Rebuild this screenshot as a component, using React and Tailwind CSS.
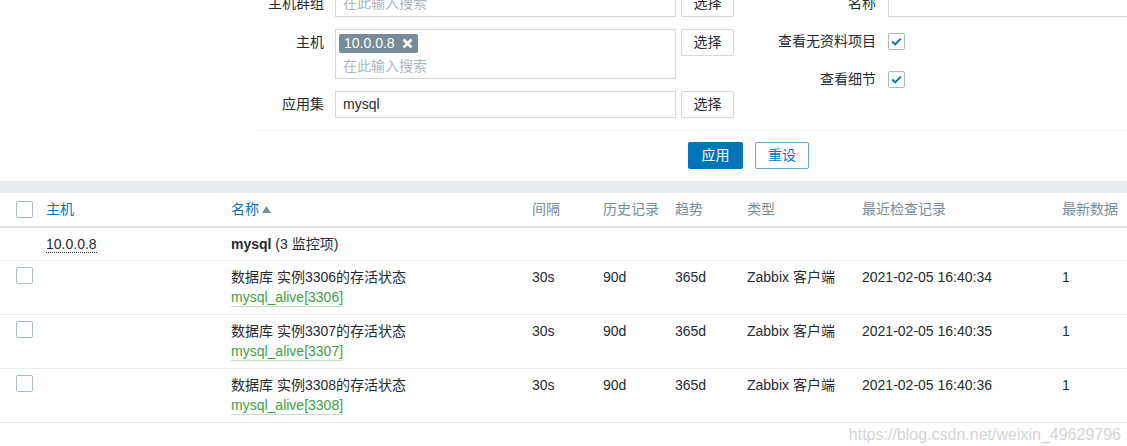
import React from 'react';

const font = { fontFamily: '"Liberation Sans", Arial, "Noto Sans CJK SC", sans-serif' };

const cols = 'grid grid-cols-[46px_185px_301px_71px_72px_72px_115px_200px_1fr]';

const Box = ({ checked }) => (
  <span className="inline-flex items-center justify-center w-[17px] h-[17px] border border-[#acbbc2] rounded-[2px] bg-white">
    {checked && (
      <svg width="11" height="9" viewBox="0 0 11 9">
        <path d="M1.2 4.6 L4.2 7.4 L9.8 1.6" fill="none" stroke="#0275b8" strokeWidth="2" />
      </svg>
    )}
  </span>
);

const SelectBtn = () => (
  <button className="ml-[5px] w-[53px] h-[27px] border border-[#cfd8dc] rounded-[2px] bg-white text-[#1f2c33] shrink-0">
    选择
  </button>
);

const items = [
  { n: '3306', t: '16:40:34' },
  { n: '3307', t: '16:40:35' },
  { n: '3308', t: '16:40:36' },
];

export default function App() {
  return (
    <div className="relative w-[1127px] h-[446px] overflow-hidden bg-[#ebeef0] text-[14px] text-[#1f2c33]" style={font}>
      <div className="bg-white h-[181px] overflow-hidden">
        <div className="ml-[258px] -mt-[10px] h-[141px] flex border-b border-[#f0f2f3]">
          <div className="flex flex-col gap-[12px]">
            <div className="flex items-center">
              <span className="w-[66px] text-right">主机群组</span>
              <div className="ml-[11px] w-[341px] h-[27px] border border-[#cfd8dc] px-[7px] leading-[25px] text-[#acb6bb]">在此输入搜索</div>
              <SelectBtn />
            </div>
            <div className="flex items-start">
              <span className="w-[66px] text-right leading-[27px]">主机</span>
              <div className="ml-[11px] w-[341px] h-[50px] border border-[#cfd8dc] px-[3px] pt-[3px]">
                <span className="inline-flex items-center h-[19px] px-[5px] rounded-[2px] bg-[#768d99] text-white leading-[19px]">
                  10.0.0.8
                  <svg className="ml-[7px]" width="11" height="11" viewBox="0 0 11 11">
                    <path d="M1.5 1.5 L9.5 9.5 M9.5 1.5 L1.5 9.5" stroke="#fff" strokeWidth="2.6" />
                  </svg>
                </span>
                <div className="px-[4px] mt-[2px] leading-[20px] text-[#acb6bb]">在此输入搜索</div>
              </div>
              <SelectBtn />
            </div>
            <div className="flex items-center">
              <span className="w-[66px] text-right">应用集</span>
              <div className="ml-[11px] w-[341px] h-[27px] border border-[#cfd8dc] px-[7px] leading-[25px]">mysql</div>
              <SelectBtn />
            </div>
          </div>
          <div className="ml-[12px] flex flex-col">
            <div className="flex items-center h-[27px]">
              <span className="w-[130px] text-right">名称</span>
              <div className="ml-[12px] w-[250px] h-[27px] border border-[#cfd8dc]"></div>
            </div>
            <div className="flex items-center h-[25px] mt-[12px]">
              <span className="w-[130px] text-right">查看无资料项目</span>
              <span className="ml-[12px] flex"><Box checked /></span>
            </div>
            <div className="flex items-center h-[25px] mt-[13px]">
              <span className="w-[130px] text-right">查看细节</span>
              <span className="ml-[12px] flex"><Box checked /></span>
            </div>
          </div>
        </div>
        <div className="flex ml-[688px] mt-[11px] gap-[12px]">
          <button className="w-[55px] h-[27px] rounded-[2px] bg-[#0275b8] text-white">应用</button>
          <button className="w-[54px] h-[27px] rounded-[2px] border border-[#5fa8d6] bg-white text-[#0275b8]">重设</button>
        </div>
      </div>

      <div className="mt-[12px] bg-white h-[253px]">
        <div className={`${cols} h-[35px] items-center border-b-2 border-[#dfe4e7] text-[#768d99]`}>
          <span className="pl-[16px] flex"><Box /></span>
          <span className="text-[#0275b8]">主机</span>
          <span className="text-[#0275b8] flex items-center">
            名称
            <svg className="ml-[3px]" width="9" height="7" viewBox="0 0 9 7"><path d="M0 7 L4.5 0 L9 7 Z" fill="#768d99" /></svg>
          </span>
          <span>间隔</span>
          <span>历史记录</span>
          <span>趋势</span>
          <span>类型</span>
          <span>最近检查记录</span>
          <span>最新数据</span>
        </div>
        <div className={`${cols} h-[33px] items-center border-b border-[#ebeef0]`}>
          <span></span>
          <span><span className="border-b border-dotted border-[#1f2c33] leading-[16px] inline-block">10.0.0.8</span></span>
          <span className="col-span-7"><b>mysql</b> (3 监控项)</span>
        </div>
        {items.map((it) => (
          <div key={it.n} className={`${cols} h-[54px] pt-[6px] border-b border-[#ebeef0] leading-[20px]`}>
            <span className="pl-[16px] flex"><Box /></span>
            <span></span>
            <span>
              <div>数据库 实例{it.n}的存活状态</div>
              <div><span className="text-[#429e47] border-b border-[#c5dfc6] leading-[18px] inline-block">mysql_alive[{it.n}]</span></div>
            </span>
            <span>30s</span>
            <span>90d</span>
            <span>365d</span>
            <span>Zabbix 客户端</span>
            <span>2021-02-05 {it.t}</span>
            <span>1</span>
          </div>
        ))}
      </div>

      <div className="absolute right-[6px] bottom-[1px] text-[16px] text-[#d4d4d4] leading-[20px]">
        https://blog.csdn.net/weixin_49629796
      </div>
    </div>
  );
}
